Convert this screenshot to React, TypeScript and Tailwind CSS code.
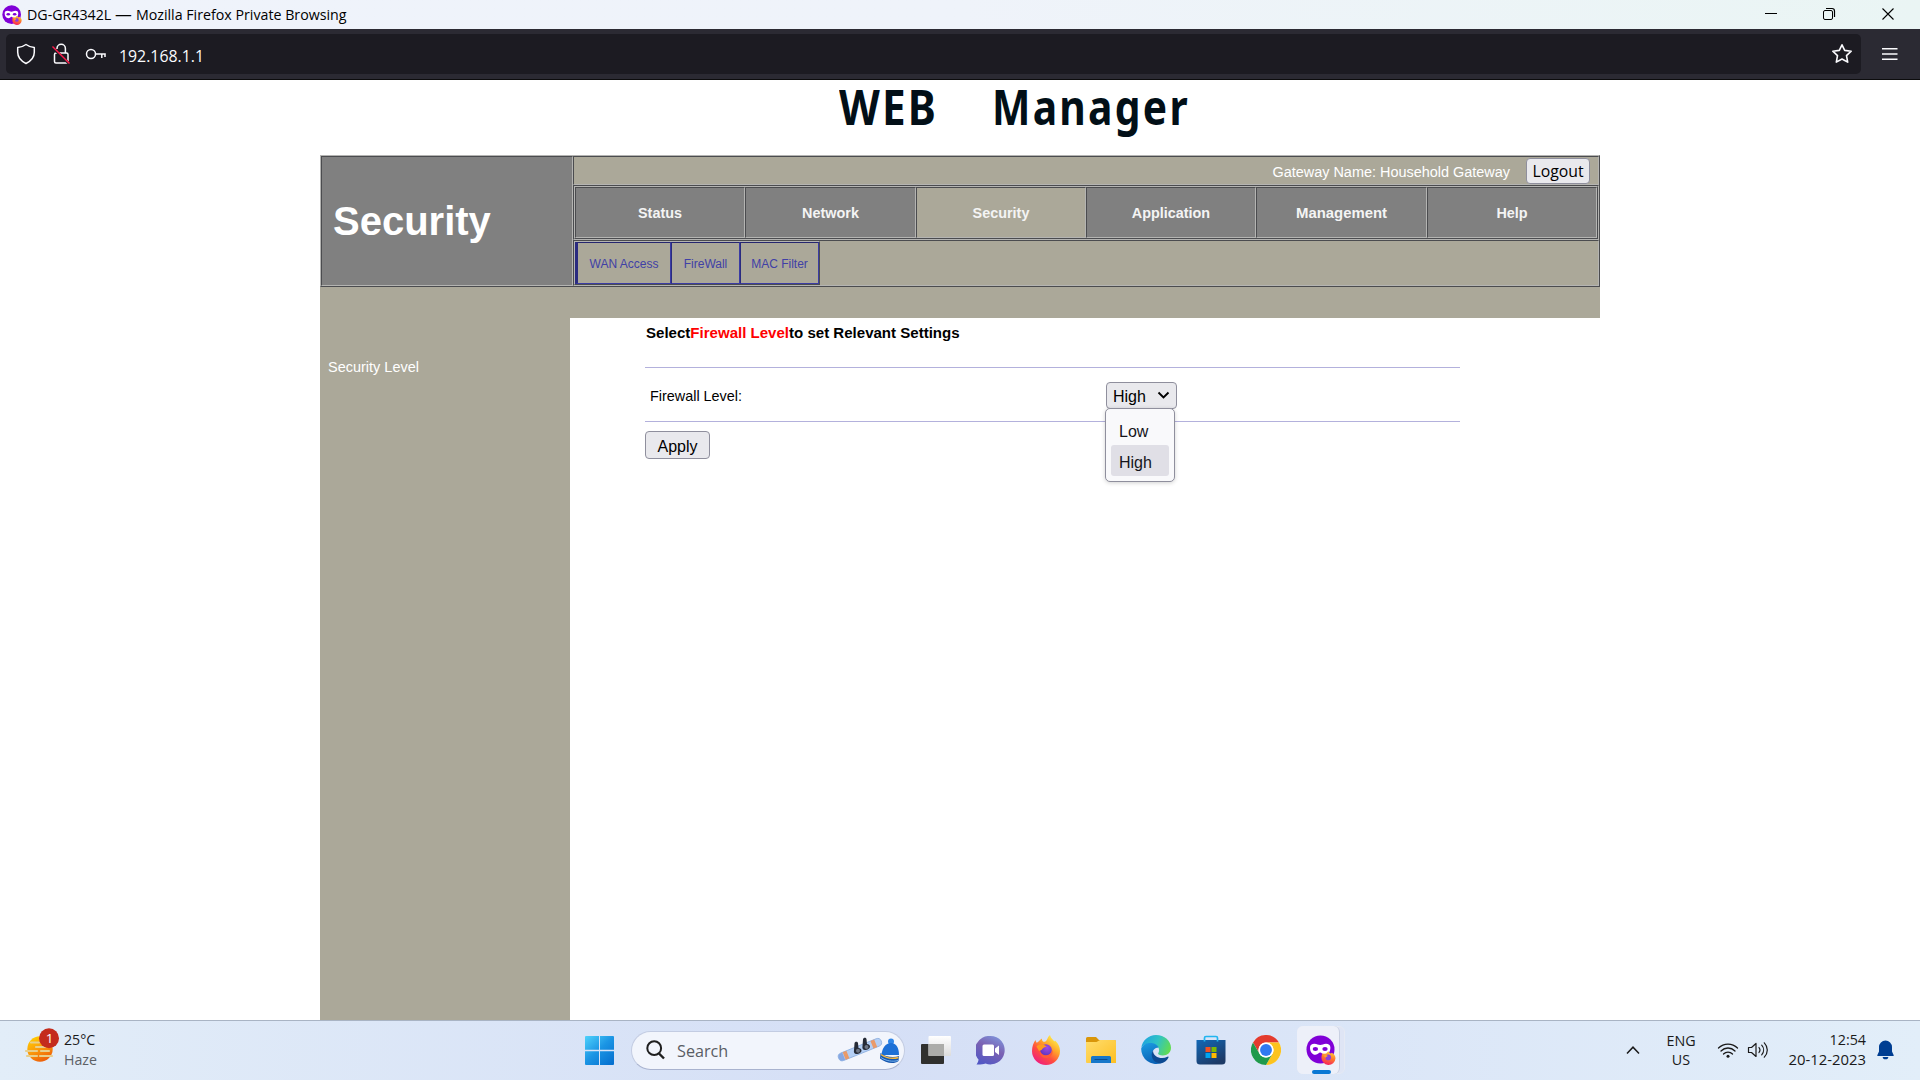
import React from "react";

const tabs = [
  { label: "Status", width: "w-[170px]" },
  { label: "Network", width: "w-[171px]" },
  { label: "Security", width: "w-[170px]", active: true },
  { label: "Application", width: "w-[170px]" },
  { label: "Management", width: "w-[171px]", tight: true },
  { label: "Help", width: "w-[170px]" },
];

const subTabs = [
  { label: "WAN Access", box: "w-[96px] border-l-[3px]" },
  { label: "FireWall", box: "w-[69px] border-l" },
  { label: "MAC Filter", box: "w-[79px] border-l" },
];

const OUTSET = "border border-t-[#b4b4b2] border-l-[#b4b4b2] border-b-[#4b4c4f] border-r-[#4b4c4f]";
const INSET = "border border-t-[#4b4c4f] border-l-[#4b4c4f] border-b-[#b4b4b2] border-r-[#b4b4b2]";

function PrivateFirefox({ size, id }: { size: number; id: string }) {
  return (
    <svg width={size} height={size} viewBox="0 0 30 30">
      <defs>
        <linearGradient id={id} x1="0.7" y1="0" x2="0.4" y2="1">
          <stop offset="0" stopColor="#ffd43a" />
          <stop offset="0.5" stopColor="#ff7a2a" />
          <stop offset="1" stopColor="#f5215e" />
        </linearGradient>
      </defs>
      <circle cx="14.5" cy="14.5" r="14" fill="#8000d7" />
      <path
        d="M4 12.500c0-2.600 1.800-3.800 4.400-3.800 2.600 0 3.800 1.300 5.800 1.300s3.200-1.300 5.800-1.300 4.400 1.200 4.400 3.800c0 4.200-2.200 7.300-5.400 7.300-2.700 0-3.400-2.200-4.800-2.200s-2.100 2.200-4.800 2.200c-3.200 0-5.400-3.100-5.400-7.300z"
        fill="#fff"
      />
      <ellipse cx="9.400" cy="14" rx="2.700" ry="1.900" fill="#8000d7" />
      <ellipse cx="19" cy="14" rx="2.700" ry="1.900" fill="#8000d7" />
      <path
        d="M15.500 22.500c0-2 .6-3.700 1.600-4.700l.7 1.600 1.300-1.500.6 1.200c.5-.9 1.600-1.700 2.800-2.900.3 1.200 1.500 1.700 2.400 2.400l1-.9c1.900 1.300 3.600 2.800 3.600 5.600a7 7 0 0 1-14-.8z"
        fill={`url(#${id})`}
      />
      <circle cx="22.200" cy="22.400" r="2.800" fill="#8a3fe0" />
      <path d="M17.500 20.500c1.500-1 3.500-.6 4.500.6-1 .3-1.900.9-2.600 1.700z" fill="#ffa12b" />
    </svg>
  );
}

function TitleBar() {
  return (
    <div className="flex h-[29px] items-center bg-linear-to-r from-[#eff3fb] via-[#eff3fa] to-[#eaf5f4] pl-0.5">
      <PrivateFirefox size={20} id="pf-title" />
      <div className="ml-[5px] font-['Open_Sans',sans-serif] text-[14.220px] leading-5 whitespace-nowrap text-black">
        DG-GR4342L <span className="mr-[3px] inline-block origin-left scale-x-[1.180]">—</span> Mozilla Firefox Private Browsing
      </div>
      <div className="ml-auto flex items-center pr-[25px] pb-px">
        <svg width="14" height="14" viewBox="0 0 14 14" stroke="#000" fill="none">
          <path d="M1 6.500h12" />
        </svg>
        <svg className="ml-11" width="14" height="14" viewBox="0 0 14 14" stroke="#000" fill="none">
          <rect x="1.500" y="3.500" width="9" height="9" rx="1.500" />
          <path d="M4 1.500h6a2.500 2.500 0 0 1 2.500 2.500v6" strokeWidth="1.200" />
        </svg>
        <svg className="ml-[45px]" width="14" height="14" viewBox="0 0 14 14" stroke="#000" fill="none">
          <path d="M1.500 1.500l11 11M12.500 1.500l-11 11" strokeWidth="1.100" />
        </svg>
      </div>
    </div>
  );
}

function AddressBar() {
  return (
    <div className="flex h-[51px] items-center border-b border-[#0c0c0d] bg-[#2b2a33] pl-1.5">
      <div className="flex h-10 w-[1855px] items-center rounded-[5px] bg-[#1c1b22] pl-2.5">
        <svg width="20" height="22" viewBox="0 0 20 22" fill="none" stroke="#fbfbfe" strokeWidth="1.500" strokeLinejoin="round">
          <path d="M10 1.500C7.500 3.300 4.500 4.300 1.700 4.600v4.700c0 4.600 2.600 8.400 8.300 11.200 5.700-2.800 8.300-6.600 8.300-11.200V4.600C15.500 4.300 12.500 3.300 10 1.500z" />
        </svg>
        <svg className="ml-[15px]" width="20" height="22" viewBox="0 0 20 22" fill="none" stroke="#fbfbfe" strokeWidth="1.500">
          <rect x="3.500" y="10" width="13.500" height="10" rx="1.500" />
          <path d="M6 6V5.500a4.200 4.200 0 0 1 8.400 0V10" />
          <path d="M1 4l17 16.500" stroke="#1c1b22" strokeWidth="2.500" />
          <path d="M1.500 3.500l17 17" stroke="#ff1a4b" strokeWidth="1.500" />
        </svg>
        <svg className="ml-3.5" width="22" height="14" viewBox="0 0 22 14" fill="none" stroke="#fbfbfe" strokeWidth="1.500">
          <circle cx="6" cy="7" r="4.500" />
          <path d="M10.500 7h10.300M16.800 7v4M20 7v3" />
        </svg>
        <div className="ml-3 pt-[3px] font-['Open_Sans',sans-serif] text-[15.850px] leading-5 text-[#fbfbfe]">192.168.1.1</div>
        <svg className="mr-2 ml-auto" width="22" height="22" viewBox="0 0 22 22" fill="none" stroke="#fbfbfe" strokeWidth="1.600" strokeLinejoin="round">
          <path d="M11 1.800l2.700 5.600 6.500.8-4.700 4.400 1.200 6.500-5.700-3.100-5.700 3.100 1.200-6.500-4.700-4.400 6.500-.8z" />
        </svg>
      </div>
      <svg className="ml-5" width="18" height="14" viewBox="0 0 18 14" stroke="#fbfbfe" strokeWidth="1.500">
        <path d="M1 1.800h15.500M1 7h15.500M1 12.200h15.500" />
      </svg>
    </div>
  );
}

function Banner() {
  return (
    <div className="flex h-[75px] pl-[839px] font-['Noto_Sans',sans-serif] text-[48.500px] leading-[52px] font-bold text-[#020f17]">
      <div className="w-[153px]">
        <span className="inline-block origin-left scale-x-[0.870] tracking-[2.500px]">WEB</span>
      </div>
      <div>
        <span className="inline-block origin-left scale-x-[0.840] tracking-[2.700px]">Manager</span>
      </div>
    </div>
  );
}

function Header() {
  return (
    <div className={`flex h-[132px] w-[1280px] bg-[#aba899] ${OUTSET}`}>
      <div className={`w-[252px] bg-[#808080] pt-[41px] pl-[11px] text-[40px] leading-[46px] font-bold text-white ${INSET}`}>
        Security
      </div>
      <div className="flex w-[1026px] flex-col">
        <div className={`flex h-[29px] items-center justify-end pr-2 ${INSET}`}>
          <span className="mr-4 pt-[3px] text-[14.450px] leading-4 text-white">Gateway Name: Household Gateway</span>
          <button className="h-[26px] w-16 rounded-[4px] border border-[#8f8f9d] bg-[#e9e9ed] font-['Open_Sans',sans-serif] text-[15.800px] leading-5 text-black">
            Logout
          </button>
        </div>
        <div className={`h-[55px] ${INSET}`}>
          <div className={`flex h-[53px] ${OUTSET}`}>
            {tabs.map((t) => (
              <div
                key={t.label}
                className={`flex items-center justify-center pt-0.5 text-[#f4f4f4] font-bold ${t.tight ? "text-[14.900px]" : "text-[14.400px]"} ${t.width} ${t.active ? "bg-[#aba899]" : "bg-[#808080]"} ${INSET}`}
              >
                {t.label}
              </div>
            ))}
          </div>
        </div>
        <div className={`h-[46px] ${INSET}`}>
          <div className={`flex h-[44px] w-[246px] ${OUTSET}`}>
            {subTabs.map((t) => (
              <div
                key={t.label}
                className={`flex items-center justify-center border-t border-r border-b border-t-[#26266e] border-r-[#3b3ca4] border-b-[#3b3ca4] border-l-[#2a2b80] text-[12px] text-[#4040a6] ${t.box}`}
              >
                <span className="pt-0.5">{t.label}</span>
              </div>
            ))}
          </div>
        </div>
      </div>
    </div>
  );
}

function LevelSelect() {
  return (
    <div className="relative">
      <div className="flex h-[27px] w-[71px] items-center rounded-[4px] border border-[#8f8f9d] bg-[#e9e9ed] pl-1.5 text-[16px] leading-5 text-black">
        <span className="pt-0.5">High</span>
        <svg className="ml-[11px]" width="13" height="9" viewBox="0 0 13 9" fill="none" stroke="#000" strokeWidth="1.900">
          <path d="M1.500 1.500l5 5 5-5" />
        </svg>
      </div>
      <div className="absolute top-[26px] -left-px w-[70px] rounded-[5px] border border-[#8f8f9d] bg-[#f9f9fb] px-[5px] py-[5px] text-[16px] text-[#15141a] shadow-[0_1px_4px_rgba(0,0,0,0.18)]">
        <div className="flex h-[31px] items-center pt-1 pl-2 leading-5">Low</div>
        <div className="flex h-[31px] items-center rounded-[3px] bg-[#e0dfe6] pt-1 pl-2 leading-5">High</div>
      </div>
    </div>
  );
}

function RouterPage() {
  return (
    <div className="flex h-[940px] flex-col bg-white font-['Liberation_Sans',Arial,sans-serif]">
      <Banner />
      <div className="mx-auto flex w-[1280px] flex-1 flex-col">
        <Header />
        <div className="h-[31px] bg-[#aba899]" />
        <div className="flex flex-1">
          <div className="w-[250px] bg-[#aba899] pt-10 pl-2 text-[14.490px] leading-[18px] text-white">Security Level</div>
          <div className="ml-[75px] w-[815px]">
            <div className="pt-1.5 pl-px text-[15.050px] leading-[18px] font-bold text-black">
              Select<span className="text-[#fe0000]">Firewall Level</span>to set Relevant Settings
            </div>
            <div className="mt-[25px] flex h-[55px] items-center border-y border-[#b3b1dc] pt-0.5">
              <div className="w-[461px] pt-0.5 pl-[5px] text-[14.400px] text-black">Firewall Level:</div>
              <LevelSelect />
            </div>
            <button className="mt-[9px] flex h-7 w-[65px] items-center justify-center rounded-[4px] border border-[#8f8f9d] bg-[#e9e9ed] pt-[3px] text-[16px] leading-5 text-black">
              Apply
            </button>
          </div>
        </div>
      </div>
    </div>
  );
}

function WeatherIcon() {
  return (
    <svg width="36" height="36" viewBox="0 0 36 36">
      <defs>
        <linearGradient id="sun" x1="0.200" y1="0" x2="0.700" y2="1">
          <stop offset="0" stopColor="#ffd000" />
          <stop offset="0.500" stopColor="#fb9a0b" />
          <stop offset="1" stopColor="#ec5a0a" />
        </linearGradient>
      </defs>
      <circle cx="16" cy="21" r="12.700" fill="url(#sun)" />
      <g stroke="#e8cf8c" strokeWidth="2.200" strokeLinecap="round">
        <path d="M7 14.500h8M12 19h9M2 23h11M17 23h8M3 28h10M16 28h12" />
      </g>
      <circle cx="25" cy="10.200" r="10" fill="#c42b1c" />
      <text x="25.500" y="15" fill="#fff" fontFamily="'Open Sans', sans-serif" fontSize="13.500" textAnchor="middle">1</text>
    </svg>
  );
}

function WindowsIcon() {
  return (
    <svg width="29" height="29" viewBox="0 0 29 29">
      <defs>
        <linearGradient id="win" gradientUnits="userSpaceOnUse" x1="0" y1="0" x2="26" y2="29">
          <stop offset="0" stopColor="#4fd2fb" />
          <stop offset="0.500" stopColor="#1b95e4" />
          <stop offset="1" stopColor="#0670cf" />
        </linearGradient>
      </defs>
      <g fill="url(#win)">
        <path d="M1 0h13v13.800H0V1a1 1 0 0 1 1-1z" />
        <path d="M15 0h13a1 1 0 0 1 1 1v12.800H15z" />
        <path d="M0 15.200h14V29H1a1 1 0 0 1-1-1z" />
        <path d="M15 15.200h14V28a1 1 0 0 1-1 1H15z" />
      </g>
    </svg>
  );
}

function SearchArt() {
  return (
    <svg width="62" height="30" viewBox="0 0 62 30">
      <g transform="rotate(-22 22 15)">
        <rect x="0" y="11" width="46" height="8" rx="4" fill="#b4cff5" stroke="#8fb0e0" strokeWidth=".8" />
        <rect x="6" y="11" width="4" height="8" fill="#e99a6a" />
        <rect x="36" y="11" width="4" height="8" fill="#e99a6a" />
        <path d="M4 11.200a3.800 3.800 0 0 0 0 7.600l1.500.1v-7.800z" fill="#86a8e3" />
      </g>
      <path d="M17.500 8.500c0-2 3-2.500 3.500-.5l.5 5c1.500 0 3 1 3 2.500 0 2-2.500 3.500-5 3.500-2 0-3-1.500-2.500-4zM26 4.500c0-2 3-2.500 3.500-.5l.5 5c1.500 0 3 1 3 2.500 0 2-2.500 3.500-5 3.500-2 0-3-1.500-2.500-4z" fill="#262b36" />
      <circle cx="21" cy="15.800" r="2" fill="#6d7686" />
      <circle cx="29.500" cy="12" r="2" fill="#6d7686" />
      <circle cx="54" cy="6.500" r="3" fill="#2f86e8" />
      <path d="M44.500 20c.5-7 4-12 9.500-12s8 5 8 12z" fill="#1d70d6" />
      <path d="M43.500 18c5 4 13 5 18.500 3l-.5 5c-5 4-13.500 1.500-18.500-2.500z" fill="#1757ae" />
      <path d="M44 19.500c5 3.500 12 4.500 17.500 3" stroke="#f4b73e" strokeWidth="1.400" fill="none" />
      <path d="M44 22.500c5 3.500 12 4.500 17 3" stroke="#78b5ef" strokeWidth="1" fill="none" />
    </svg>
  );
}

function TaskViewIcon() {
  return (
    <svg width="30" height="28" viewBox="0 0 30 28">
      <defs>
        <linearGradient id="tvw" x1="0" y1="0" x2="0" y2="1">
          <stop offset="0" stopColor="#fff" />
          <stop offset="1" stopColor="#dcdcdc" />
        </linearGradient>
      </defs>
      <rect x="0" y="8" width="23" height="20" rx="1" fill="#30302e" />
      <rect x="7.500" y="0" width="22.500" height="20" rx="1" fill="url(#tvw)" />
      <rect x="7.500" y="8" width="15.500" height="12" fill="#acaca9" />
    </svg>
  );
}

function ChatIcon() {
  return (
    <svg width="29" height="29" viewBox="0 0 29 29">
      <defs>
        <linearGradient id="chat" x1="0.800" y1="0" x2="0.300" y2="1">
          <stop offset="0" stopColor="#7f95dc" />
          <stop offset="0.450" stopColor="#7b62b3" />
          <stop offset="1" stopColor="#5257c4" />
        </linearGradient>
      </defs>
      <path d="M14.500 0a14.200 14.200 0 1 1-5 27.500c-2.500.8-6 1.300-9 1 1.200-1.700 2-3.500 2-5A14.200 14.200 0 0 1 14.500 0z" fill="url(#chat)" />
      <rect x="6.500" y="8.500" width="11.500" height="11.500" rx="1.500" fill="#fff" />
      <path d="M19 12.500l4-3v9.500l-4-3z" fill="#fff" />
    </svg>
  );
}

function FirefoxIcon() {
  return (
    <svg width="28" height="30" viewBox="0 0 28 30">
      <defs>
        <linearGradient id="ff" x1="0.850" y1="0.100" x2="0.250" y2="0.950">
          <stop offset="0" stopColor="#fff04a" />
          <stop offset="0.350" stopColor="#ffa52a" />
          <stop offset="0.650" stopColor="#ff4f3e" />
          <stop offset="1" stopColor="#f0207c" />
        </linearGradient>
        <radialGradient id="ffc" cx="0.600" cy="0.300" r="0.800">
          <stop offset="0" stopColor="#a04be8" />
          <stop offset="1" stopColor="#5533b8" />
        </radialGradient>
      </defs>
      <path
        d="M0 16c0-4.500 1.500-8.500 3.500-11 .2 1.200.6 2 1.200 2.700C6.500 7 8 4.800 10 3.500c-.2 1.700.4 2.700 1.500 3.300 2 .1 3.300-1.500 4-3.400C16 2 17 1 18 0c.8 3.500 3 4.500 4.500 6.500L23 5.500c3.200 2.500 5 6.500 5 10.500a14 14 0 0 1-28 0z"
        fill="url(#ff)"
      />
      <circle cx="14" cy="15" r="5.800" fill="url(#ffc)" />
      <path d="M4.500 11.500c2.500-2.500 7-2.600 10.300.2-2.200 0-4.300 1.300-5.300 3.300l-2.500 1z" fill="#ff9a1f" />
      <path d="M7.500 15c.5 3.500 3.500 5.500 7 5.200 3-.3 5.500-2.500 6-5.500.8 5-2.500 8.300-6.500 8.300s-7-3.500-6.500-8z" fill="#ff5b36" />
    </svg>
  );
}

function FolderIcon() {
  return (
    <svg width="30" height="27" viewBox="0 0 30 27">
      <defs>
        <linearGradient id="fold" x1="0" y1="0" x2="1" y2="1">
          <stop offset="0" stopColor="#ffdd6e" />
          <stop offset="1" stopColor="#fdbf22" />
        </linearGradient>
      </defs>
      <path d="M0 1.500A1.500 1.500 0 0 1 1.500 0H10l3 3h15.500A1.500 1.500 0 0 1 30 4.500V10H0z" fill="#d9960a" />
      <path d="M0 5h10.500L14 3h14.500A1.500 1.500 0 0 1 30 4.500V26H1a1 1 0 0 1-1-1z" fill="url(#fold)" />
      <path d="M5 26v-5.500A1.500 1.500 0 0 1 6.500 19h17a1.500 1.500 0 0 1 1.500 1.500V26z" fill="#1777c9" />
      <path d="M9 22.500h12" stroke="#0a4c90" strokeWidth="1.200" strokeLinecap="round" />
    </svg>
  );
}

function EdgeIcon() {
  return (
    <svg width="30" height="30" viewBox="0 0 30 30">
      <defs>
        <linearGradient id="edgeTop" x1="0" y1="0.300" x2="1" y2="0.600">
          <stop offset="0" stopColor="#1fa3e0" />
          <stop offset="0.500" stopColor="#2fc3c5" />
          <stop offset="1" stopColor="#62dc50" />
        </linearGradient>
        <linearGradient id="edgeLeft" x1="0" y1="0" x2="0.300" y2="1">
          <stop offset="0" stopColor="#1b9de2" />
          <stop offset="1" stopColor="#0b64b8" />
        </linearGradient>
      </defs>
      <path d="M.3 13C1.200 5.500 7.500 0 15 0c8.500 0 15 6 15 12.800 0 4.800-3.700 7.700-8.200 7.700-3.300 0-4.700-1.100-4.700-2 0-.8 1-1.200 1-3.300 0-3.700-4-6.700-8.600-6.700-5 0-8.500 2.500-9.200 4.500z" fill="url(#edgeTop)" />
      <path d="M.2 13.500C1.500 10 5 8 9.300 8c4.200 0 7.300 1.900 8.300 4.500-4 0-6.300 3-6.300 6.600 0 5.400 4.500 8.900 8.500 9.100A15 15 0 0 1 .2 13.500z" fill="url(#edgeLeft)" />
      <path d="M12 15.500c-3.500 5 .3 13 7.500 12.900 3.500-.5 6.500-3 8-6 .3-.8-.4-1-1-.6-6 3-14.500.5-14.500-6.300z" fill="#0c4a92" />
    </svg>
  );
}

function StoreIcon() {
  return (
    <svg width="30" height="30" viewBox="0 0 30 30">
      <defs>
        <linearGradient id="store" x1="0" y1="0" x2="0.600" y2="1">
          <stop offset="0" stopColor="#1268b6" />
          <stop offset="1" stopColor="#1d3a66" />
        </linearGradient>
      </defs>
      <path d="M.5 5h29v21a3.500 3.500 0 0 1-3.500 3.500H4A3.500 3.500 0 0 1 .5 26z" fill="url(#store)" />
      <path d="M8.500 6.500V3A1.500 1.500 0 0 1 10 1.500h10A1.500 1.500 0 0 1 21.500 3v3.500" fill="none" stroke="#22b5f0" strokeWidth="1.700" />
      <rect x="9.500" y="12" width="5" height="5" fill="#f25022" />
      <rect x="15.500" y="12" width="5" height="5" fill="#7fba00" />
      <rect x="9.500" y="18" width="5" height="5" fill="#00a4ef" />
      <rect x="15.500" y="18" width="5" height="5" fill="#ffb900" />
    </svg>
  );
}

function ChromeIcon() {
  return (
    <svg width="30" height="30" viewBox="0 0 48 48">
      <circle cx="24" cy="24" r="24" fill="#fff" />
      <path d="M3.200 12A24 24 0 0 1 44.800 12H24a12 12 0 0 0-10.400 18z" fill="#e33b2e" />
      <path d="M44.800 12A24 24 0 0 1 24 48l10.400-18A12 12 0 0 0 24 12z" fill="#fcc31e" />
      <path d="M24 48A24 24 0 0 1 3.200 12l10.400 18a12 12 0 0 0 20.800 0z" fill="#1f9a4c" />
      <circle cx="24" cy="24" r="12" fill="#fff" />
      <circle cx="24" cy="24" r="9.500" fill="#3079f0" />
    </svg>
  );
}

function AppSlot({ children }: { children: React.ReactNode }) {
  return <div className="flex h-12 w-[55px] items-center justify-center">{children}</div>;
}

function Tray() {
  return (
    <div className="ml-auto flex h-full items-center pb-px font-['Open_Sans',sans-serif] text-[14.300px] leading-5 text-[#1a1a1a]">
      <svg width="16" height="10" viewBox="0 0 16 10" fill="none" stroke="#1a1a1a" strokeWidth="1.500">
        <path d="M2 8.500l6-6.300 6 6.300" />
      </svg>
      <div className="ml-2.5 w-[60px] text-center leading-[19.500px]">
        <div>ENG</div>
        <div>US</div>
      </div>
      <svg className="ml-[6px]" width="22" height="17" viewBox="0 0 22 17" fill="none" stroke="#1a1a1a" strokeWidth="1.300" strokeLinecap="round">
        <path d="M1.500 6c5.300-5.300 13.700-5.300 19 0M4 9c4-4 10-4 14 0M6.500 12c2.600-2.600 6.400-2.600 9 0" />
        <circle cx="11" cy="14.300" r="1.500" fill="#1a1a1a" stroke="none" />
      </svg>
      <svg className="ml-[8px]" width="22" height="18" viewBox="0 0 22 18" fill="none" stroke="#1a1a1a" strokeWidth="1.200" strokeLinejoin="round" strokeLinecap="round">
        <path d="M1.500 6.500h3l4.500-4v13l-4.500-4h-3z" />
        <path d="M12 6.500c1.200 1.500 1.200 3.500 0 5M14.700 4.200c2.500 2.800 2.500 6.800 0 9.600M17.300 1.800c4 4.200 4 10.200 0 14.400" />
      </svg>
      <div className="ml-4 w-[81px] pb-px text-right leading-[19.500px]">
        <div>12:54</div>
        <div className="-ml-1 text-[14.850px]">20-12-2023</div>
      </div>
      <svg className="mr-[26px] ml-[11px]" width="17" height="20" viewBox="0 0 17 20" fill="#003e92">
        <path d="M8.500.5a6.500 6.500 0 0 1 6.500 6.500v4.500l1.600 3.500a.8.800 0 0 1-.7 1.100H1.100a.8.800 0 0 1-.7-1.100L2 11.500V7A6.500 6.500 0 0 1 8.500.5zM5.700 17h5.600a2.800 2.300 0 0 1-5.600 0z" />
      </svg>
    </div>
  );
}

function Taskbar() {
  return (
    <div className="flex h-[60px] items-center border-t border-[#a9b4c4] bg-linear-to-r from-[#e2edf8] from-0% via-[#d5dff6] via-45% to-[#e2eef9] to-100%">
      <div className="flex w-[585px] items-center pl-6 font-['Open_Sans',sans-serif]">
        <div className="pb-2.5">
          <WeatherIcon />
        </div>
        <div className="ml-[4px] pb-0.5 text-[14.200px] leading-5">
          <div className="text-[#1a1a1a]">25°C</div>
          <div className="text-[#5c6066]">Haze</div>
        </div>
      </div>
      <WindowsIcon />
      <div className="mb-px ml-[17px] flex h-[39px] w-[274px] items-center rounded-full border border-[#c3cce2] border-b-[#a9b3cf] bg-[#f2f5fc] pl-3.5">
        <svg width="19" height="20" viewBox="0 0 19 20" fill="none" stroke="#1f1f1f" strokeWidth="2">
          <circle cx="8.200" cy="8.200" r="6.900" />
          <path d="M13 13.500l5 5" strokeWidth="2.400" />
        </svg>
        <span className="ml-3 pt-px font-['Open_Sans',sans-serif] text-[16.200px] leading-5 text-[#5a5d64]">Search</span>
        <div className="mr-[5px] ml-auto">
          <SearchArt />
        </div>
      </div>
      <div className="ml-[3px] flex items-center pb-px">
        <AppSlot><TaskViewIcon /></AppSlot>
        <AppSlot><ChatIcon /></AppSlot>
        <AppSlot><FirefoxIcon /></AppSlot>
        <AppSlot><FolderIcon /></AppSlot>
        <AppSlot><EdgeIcon /></AppSlot>
        <AppSlot><StoreIcon /></AppSlot>
        <AppSlot><ChromeIcon /></AppSlot>
        <div className="ml-1 h-12 w-12 rounded-[6px] border border-[#e6eaf4] bg-[#dfe5f5]">
          <div className="-mt-px -ml-px flex h-12 w-[43px] flex-col items-center rounded-[6px] border-r border-[#c9d0e2] bg-[#edf0f9] pt-[9px] pl-1.5">
            <PrivateFirefox size={30} id="pf-task" />
            <div className="mt-[5px] h-1 w-[19px] rounded-full bg-[#0a78d4]" />
          </div>
        </div>
      </div>
      <Tray />
    </div>
  );
}

export default function App() {
  return (
    <div className="flex h-[1080px] w-[1920px] flex-col overflow-hidden bg-white">
      <TitleBar />
      <AddressBar />
      <RouterPage />
      <Taskbar />
    </div>
  );
}
